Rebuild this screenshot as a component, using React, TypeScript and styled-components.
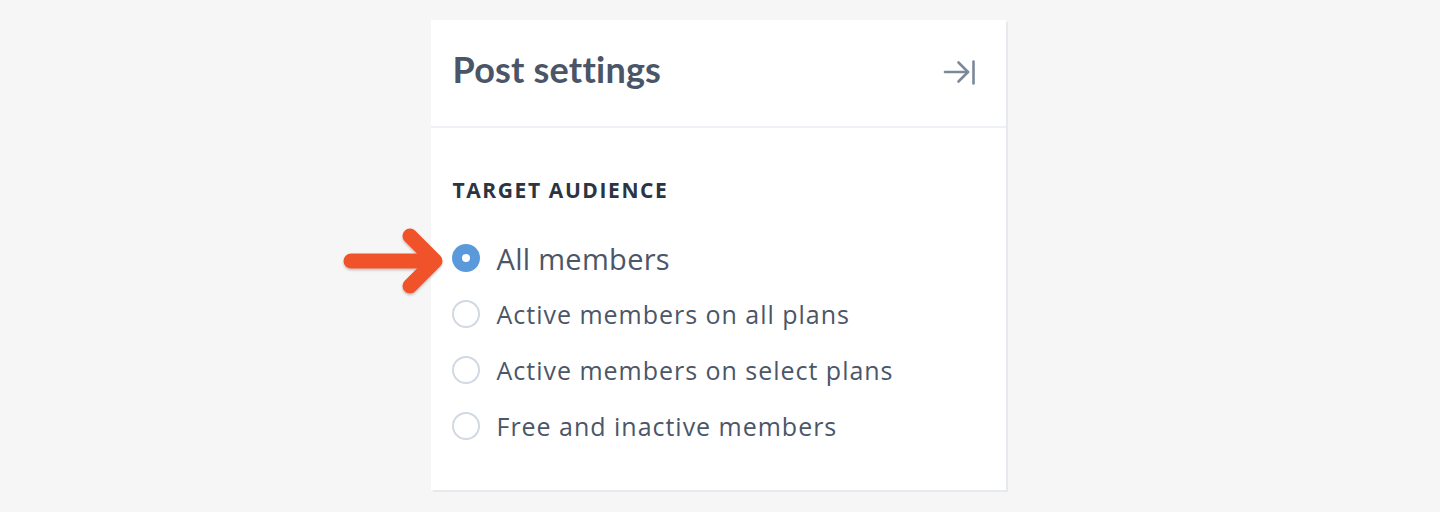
import React from 'react';
import styled, { createGlobalStyle } from 'styled-components';

const GlobalStyle = createGlobalStyle`
  html, body {
    margin: 0;
    padding: 0;
    background: #f6f6f6;
    font-family: 'Open Sans', Lato, sans-serif;
  }
`;

const Page = styled.div`
  display: flex;
  justify-content: center;
  padding-top: 20px;
  height: 512px;
  box-sizing: border-box;
`;

const Panel = styled.section`
  width: 575px;
  height: 470px;
  margin-left: -4px;
  background: #fff;
  box-shadow: 2px 2px 0 #e6e9ee;
  display: flex;
  flex-direction: column;
`;

const Header = styled.header`
  height: 108px;
  box-sizing: border-box;
  display: flex;
  align-items: center;
  justify-content: space-between;
  padding: 0 27px 0 22px;
  border-bottom: 2px solid #eef1f5;
`;

const Title = styled.h1`
  margin: 0 0 8px;
  font-family: Lato, 'Open Sans', sans-serif;
  font-size: 36px;
  font-weight: 700;
  color: #4a5567;
  letter-spacing: 0.2px;
`;

const CloseButton = styled.button`
  border: none;
  background: none;
  padding: 0;
  width: 36px;
  height: 28px;
  display: flex;
  color: #7b899a;
  cursor: pointer;
`;

const Body = styled.div`
  padding: 50px 22px 0 21px;
`;

const SectionLabel = styled.h2`
  margin: 0 0 28px 1px;
  font-size: 21px;
  line-height: 24px;
  font-weight: 700;
  color: #2b3443;
  letter-spacing: 1.6px;
  text-transform: uppercase;
`;

const Options = styled.div`
  display: flex;
  flex-direction: column;
`;

const Option = styled.label`
  position: relative;
  height: 56px;
  display: flex;
  align-items: center;
  gap: 17px;
  cursor: pointer;
`;

const Radio = styled.span<{ checked: boolean }>`
  width: 28px;
  height: 28px;
  box-sizing: border-box;
  border-radius: 50%;
  flex-shrink: 0;
  border: ${({ checked }) => (checked ? '10px solid #5a9ada' : '2px solid #d2d9e3')};
  background: #fff;
`;

const OptionText = styled.span<{ checked: boolean }>`
  font-size: ${({ checked }) => (checked ? '29px' : '25px')};
  color: #4b5668;
  letter-spacing: ${({ checked }) => (checked ? '0.3px' : '0.98px')};
`;

const Pointer = styled.svg`
  position: absolute;
  left: -110px;
  top: -4px;
  overflow: visible;
`;

const options = [
  'All members',
  'Active members on all plans',
  'Active members on select plans',
  'Free and inactive members',
];

export default function App() {
  const selected = 0;
  return (
    <>
      <GlobalStyle />
      <Page>
        <Panel>
          <Header>
            <Title>Post settings</Title>
            <CloseButton aria-label="Close settings">
              <svg width="36" height="28" viewBox="0 0 36 28" fill="none" stroke="currentColor" strokeWidth="2.6" strokeLinecap="round" strokeLinejoin="round">
                <path d="M2 13h23" />
                <path d="M15.5 3.5 25 13l-9.5 9.5" />
                <path d="M30.5 2.5v22" />
              </svg>
            </CloseButton>
          </Header>
          <Body>
            <SectionLabel>Target audience</SectionLabel>
            <Options>
              {options.map((o, i) => (
                <Option key={o}>
                  {i === selected && (
                    <Pointer width="100" height="70" viewBox="0 0 100 70">
                      <defs>
                        <filter id="sh" x="-20%" y="-20%" width="140%" height="160%">
                          <feDropShadow dx="0" dy="1.5" stdDeviation="1" floodColor="#000" floodOpacity="0.25" />
                        </filter>
                      </defs>
                      <g filter="url(#sh)" fill="none" stroke="#f0522a" strokeWidth="15" strokeLinecap="round" strokeLinejoin="round">
                        <path d="M9 35h82" />
                        <path d="M68 10l25 25-25 25" />
                      </g>
                    </Pointer>
                  )}
                  <Radio checked={i === selected} />
                  <OptionText checked={i === selected}>{o}</OptionText>
                </Option>
              ))}
            </Options>
          </Body>
        </Panel>
      </Page>
    </>
  );
}
